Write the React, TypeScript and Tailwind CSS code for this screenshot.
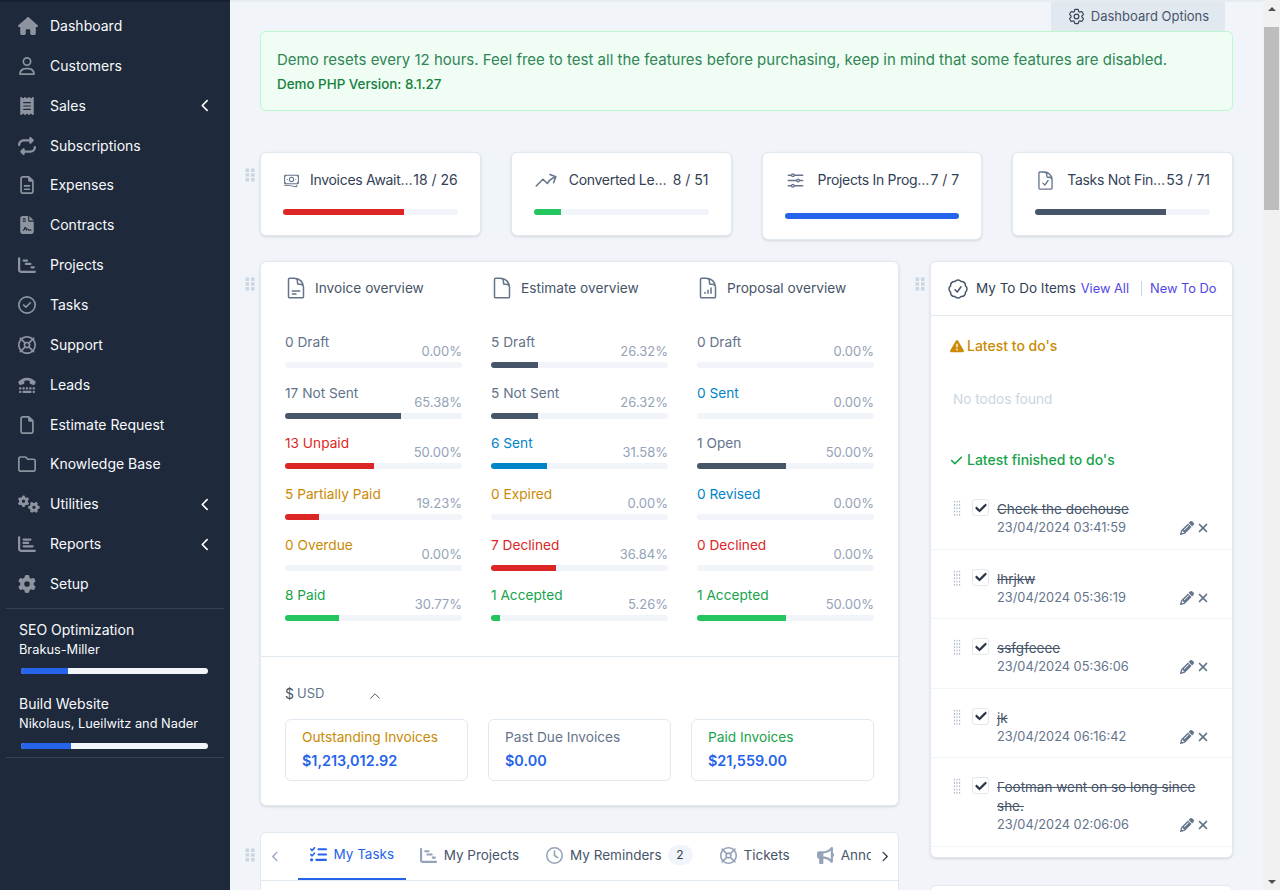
import type { ReactNode } from 'react';
import {
  FaBullhorn,
  FaChartBar,
  FaChartGantt,
  FaCheck,
  FaChevronLeft,
  FaChevronRight,
  FaFileContract,
  FaGear,
  FaGears,
  FaHouse,
  FaListCheck,
  FaPencil,
  FaReceipt,
  FaRegCircleCheck,
  FaRegClock,
  FaRegFile,
  FaRegFileLines,
  FaRegFolder,
  FaRegLifeRing,
  FaRegUser,
  FaRepeat,
  FaTriangleExclamation,
  FaTty,
  FaXmark,
} from 'react-icons/fa6';
import {
  HiOutlineAdjustmentsHorizontal,
  HiOutlineArrowTrendingUp,
  HiOutlineBanknotes,
  HiOutlineCheckBadge,
  HiOutlineChevronUp,
  HiOutlineCog6Tooth,
  HiOutlineDocument,
  HiOutlineDocumentChartBar,
  HiOutlineDocumentCheck,
  HiOutlineDocumentText,
} from 'react-icons/hi2';

const menu = [
  { label: 'Dashboard', icon: <FaHouse className="text-[20px]" /> },
  { label: 'Customers', icon: <FaRegUser /> },
  { label: 'Sales', icon: <FaReceipt />, sub: true },
  { label: 'Subscriptions', icon: <FaRepeat /> },
  { label: 'Expenses', icon: <FaRegFileLines /> },
  { label: 'Contracts', icon: <FaFileContract /> },
  { label: 'Projects', icon: <FaChartGantt /> },
  { label: 'Tasks', icon: <FaRegCircleCheck /> },
  { label: 'Support', icon: <FaRegLifeRing /> },
  { label: 'Leads', icon: <FaTty /> },
  { label: 'Estimate Request', icon: <FaRegFile /> },
  { label: 'Knowledge Base', icon: <FaRegFolder /> },
  { label: 'Utilities', icon: <FaGears className="text-[22px]" />, sub: true },
  { label: 'Reports', icon: <FaChartBar />, sub: true },
  { label: 'Setup', icon: <FaGear /> },
];

const slate = { text: 'text-[#64748b]', bar: 'bg-[#475569]' };
const red = { text: 'text-[#dc2626]', bar: 'bg-[#dc2626]' };
const amber = { text: 'text-[#ca8a04]', bar: 'bg-[#ca8a04]' };
const green = { text: 'text-[#16a34a]', bar: 'bg-[#22c55e]' };
const sky = { text: 'text-[#0284c7]', bar: 'bg-[#0284c7]' };

const overviews = [
  {
    title: 'Invoice overview',
    icon: <HiOutlineDocumentText />,
    rows: [
      { label: '0 Draft', pct: 0, ...slate },
      { label: '17 Not Sent', pct: 65.38, ...slate },
      { label: '13 Unpaid', pct: 50, ...red },
      { label: '5 Partially Paid', pct: 19.23, text: amber.text, bar: red.bar },
      { label: '0 Overdue', pct: 0, ...amber },
      { label: '8 Paid', pct: 30.77, ...green },
    ],
  },
  {
    title: 'Estimate overview',
    icon: <HiOutlineDocument />,
    rows: [
      { label: '5 Draft', pct: 26.32, ...slate },
      { label: '5 Not Sent', pct: 26.32, ...slate },
      { label: '6 Sent', pct: 31.58, ...sky },
      { label: '0 Expired', pct: 0, ...amber },
      { label: '7 Declined', pct: 36.84, ...red },
      { label: '1 Accepted', pct: 5.26, ...green },
    ],
  },
  {
    title: 'Proposal overview',
    icon: <HiOutlineDocumentChartBar />,
    rows: [
      { label: '0 Draft', pct: 0, ...slate },
      { label: '0 Sent', pct: 0, ...sky },
      { label: '1 Open', pct: 50, ...slate },
      { label: '0 Revised', pct: 0, ...sky },
      { label: '0 Declined', pct: 0, ...red },
      { label: '1 Accepted', pct: 50, ...green },
    ],
  },
];

const todos = [
  { text: 'Check the dochouse', date: '23/04/2024 03:41:59' },
  { text: 'lhrjkw', date: '23/04/2024 05:36:19' },
  { text: 'ssfgfeeee', date: '23/04/2024 05:36:06' },
  { text: 'jk', date: '23/04/2024 06:16:42' },
  { text: 'Footman went on so long since she.', date: '23/04/2024 02:06:06' },
];

function Grip({ className }: { className: string }) {
  return (
    <div className={`shrink-0 pt-[16px] ${className}`}>
      <svg width="11" height="14" viewBox="0 0 11 14" className="fill-[#cbd5e1]">
        <rect x="0.5" y="0.5" width="3.6" height="3.6" rx="0.5" />
        <rect x="6" y="0.5" width="3.6" height="3.6" rx="0.5" />
        <rect x="0.5" y="5.2" width="3.6" height="3.6" rx="0.5" />
        <rect x="6" y="5.2" width="3.6" height="3.6" rx="0.5" />
        <rect x="0.5" y="9.9" width="3.6" height="3.6" rx="0.5" />
        <rect x="6" y="9.9" width="3.6" height="3.6" rx="0.5" />
      </svg>
    </div>
  );
}

function Sidebar() {
  return (
    <aside className="w-[230px] shrink-0 h-full bg-[#1e293b] border-t-2 border-[#18212f] pt-[4px] text-[#f8fafc]">
      {menu.map((item) => (
        <div key={item.label} className="h-[39.86px] flex items-center pl-[18px] pr-[18.5px]">
          <span className="w-[32px] text-[18px] text-[#8d94a0] shrink-0">{item.icon}</span>
          <span className="flex-1 text-sm">{item.label}</span>
          {item.sub && <FaChevronLeft className="text-[13px] text-white" />}
        </div>
      ))}
      <div className="mx-[6px] mt-[4px] border-t border-b border-[#334155] pt-[11px] pb-[8px]">
        <SidebarProject name="SEO Optimization" client="Brakus-Miller" pct={25} />
        <SidebarProject name="Build Website" client="Nikolaus, Lueilwitz and Nader" pct={27} />
      </div>
    </aside>
  );
}

function SidebarProject({ name, client, pct }: { name: string; client: string; pct: number }) {
  return (
    <div className="pl-[13px] pr-[16px] mb-[20px] last:mb-0">
      <p className="text-sm leading-[20px]">{name}</p>
      <p className="text-[12.8px] leading-[19.5px]">{client}</p>
      <div className="ml-[2px] mt-[9px] h-[6px] rounded-full bg-[#f1f5f9] overflow-hidden">
        <div className="h-full bg-[#2563eb]" style={{ width: `${pct}%` }} />
      </div>
    </div>
  );
}

function StatCard({ icon, iconBox, title, value, pct, bar, tall }: { icon: ReactNode; iconBox: string; title: string; value: string; pct: number; bar: string; tall?: boolean }) {
  return (
    <div className={`flex-1 min-w-0 bg-white border border-[#e2e8f0] rounded-md shadow-sm px-[22px] pt-[17px] ${tall ? 'h-[88px]' : 'h-[84px]'}`}>
      <div className="flex items-center h-[20px] text-sm text-[#334155]">
        <span className={`text-[#64748b] shrink-0 ${iconBox}`}>{icon}</span>
        <span className="truncate flex-1 min-w-0 tracking-[-0.3px]">{title}</span>
        <span className="shrink-0">{value}</span>
      </div>
      <div className={`h-[6px] rounded-full bg-[#f1f5f9] overflow-hidden ${tall ? 'mt-[23px]' : 'mt-[19px]'}`}>
        <div className={`h-full ${bar}`} style={{ width: `${pct}%` }} />
      </div>
    </div>
  );
}

function Overview({ title, icon, rows }: (typeof overviews)[number]) {
  return (
    <div className="flex-1 min-w-0">
      <div className="flex items-center h-[26px] gap-[7px] text-[13.7px] text-[#475569]">
        <span className="text-[24px] text-[#64748b] -ml-[1px]">{icon}</span>
        {title}
      </div>
      <div className="mt-[31px]">
        {rows.map((row) => (
          <div key={row.label} className="h-[50.7px]">
            <div className="flex justify-between h-[30px]">
              <span className={`text-[13.7px] leading-[20px] ${row.text}`}>{row.label}</span>
              <span className="text-[13px] text-[#94a3b8] pt-[9px] leading-[20px]">{row.pct.toFixed(2)}%</span>
            </div>
            <div className="h-[6px] rounded-full bg-[#f1f5f9] overflow-hidden">
              <div className={`h-full ${row.bar}`} style={{ width: `${row.pct}%` }} />
            </div>
          </div>
        ))}
      </div>
    </div>
  );
}

function Total({ label, value, color }: { label: string; value: string; color: string }) {
  return (
    <div className="flex-1 h-[62px] border border-[#e2e8f0] rounded-md px-[16px] pt-[7px]">
      <p className={`text-[13.7px] leading-[20px] ${color}`}>{label}</p>
      <p className="text-[14.4px] font-semibold leading-[20px] mt-[4px] text-[#2563eb]">{value}</p>
    </div>
  );
}

function TodoRow({ text, date }: { text: string; date: string }) {
  return (
    <div className="flex border-b border-[#f1f5f9] pl-[22px] pr-[22px] pt-[20px] pb-[11.5px]">
      <div className="w-[8px] h-[17px] mr-[11px] shrink-0 bg-[radial-gradient(circle,#94a3b8_0.6px,transparent_0.7px)] bg-[length:2.7px_3.3px]" />
      <div className="w-[17px] h-[17px] mt-[-1px] mr-[8px] shrink-0 rounded-[3px] border border-[#e2e8f0] bg-white flex items-center justify-center">
        <FaCheck className="text-[12px] text-[#1e293b] stroke-current stroke-[40]" />
      </div>
      <div className="flex-1 min-w-0">
        <p className="text-[13.5px] text-[#475569] line-through leading-[19px]">{text}</p>
        <div className="flex items-center justify-between">
          <span className="text-[12.8px] text-[#64748b] leading-[18px]">{date}</span>
          <span className="flex items-center gap-[2px] text-[#64748b]">
            <FaPencil className="text-[14px]" />
            <FaXmark className="text-[14px]" />
          </span>
        </div>
      </div>
    </div>
  );
}

function Tab({ icon, label, active, badge }: { icon: ReactNode; label: string; active?: boolean; badge?: string }) {
  return (
    <div className={`flex items-center h-[47px] pb-[3px] shrink-0 gap-[7px] text-[13.5px] ${active ? 'px-[12px] border-b-2 border-[#2563eb] text-[#2563eb]' : 'px-[13.5px] text-[#475569]'}`}>
      <span className={`text-[17px] ${active ? 'text-[#2563eb]' : 'text-[#94a3b8]'}`}>{icon}</span>
      {label}
      {badge && <span className="w-[25px] h-[20px] -ml-[1px] rounded-full bg-[#f1f5f9] text-[#334155] text-xs flex items-center justify-center">{badge}</span>}
    </div>
  );
}

function Scrollbar() {
  return (
    <div className="w-[17px] shrink-0 h-full bg-[#f1f1f1] flex flex-col items-center">
      <div className="h-[17px] flex items-center justify-center">
        <div className="w-0 h-0 border-x-[4px] border-x-transparent border-b-[4px] border-b-[#505050]" />
      </div>
      <div className="w-[15px] h-[183px] mt-[10px] bg-[#bdbdbd]" />
      <div className="flex-1" />
      <div className="h-[17px] flex items-center justify-center">
        <div className="w-0 h-0 border-x-[4px] border-x-transparent border-t-[4px] border-t-[#505050]" />
      </div>
    </div>
  );
}

export default function App() {
  return (
    <div className="flex h-[890px] w-full overflow-hidden bg-[#f1f5f9] font-['Inter',sans-serif]">
      <Sidebar />
      <main className="flex-1 min-w-0 overflow-hidden border-t-2 border-[#e2e8f0]/70">
        <div className="flex justify-end pr-[38px]">
          <div className="w-[174px] h-[29px] bg-[#e2e8f0] flex items-center justify-center gap-[5px] text-[13px] text-[#475569]">
            <HiOutlineCog6Tooth className="text-[19px] text-[#334155]" />
            Dashboard Options
          </div>
        </div>
        <div className="pr-[30px]">
          <div className="ml-[30px] h-[80px] rounded-md border border-[#bbf7d0] bg-[#f0fdf4] pl-[16px] pt-[17px] text-[#15803d]">
            <p className="text-[15px] leading-[22px] text-[#2f8554]">Demo resets every 12 hours. Feel free to test all the features before purchasing, keep in mind that some features are disabled.</p>
            <p className="text-[13.4px] font-medium leading-[20px] mt-[3px]">Demo PHP Version: 8.1.27</p>
          </div>

          <div className="flex mt-[41px]">
            <Grip className="w-[30px] pl-[15px]" />
            <div className="flex-1 min-w-0 flex items-start gap-[30px]">
              <StatCard iconBox="w-[27px]" icon={<HiOutlineBanknotes className="text-[17px]" />} title="Invoices Awaiting Payment" value="18 / 26" pct={69.2} bar="bg-[#dc2626]" />
              <StatCard iconBox="w-[35px]" icon={<HiOutlineArrowTrendingUp className="text-[24px]" />} title="Converted Leads" value="8 / 51" pct={15.7} bar="bg-[#22c55e]" />
              <StatCard iconBox="w-[33px]" icon={<HiOutlineAdjustmentsHorizontal className="text-[21px]" />} title="Projects In Progress" value="7 / 7" pct={100} bar="bg-[#2563eb]" tall />
              <StatCard iconBox="w-[32px]" icon={<HiOutlineDocumentCheck className="text-[21px]" />} title="Tasks Not Finished" value="53 / 71" pct={74.6} bar="bg-[#475569]" />
            </div>
          </div>

          <div className="flex items-start mt-[21px]">
            <div className="shrink-0">
              <div className="flex items-start">
                <Grip className="w-[30px] pl-[15px]" />
                <section className="w-[639px] shrink-0 h-[545px] bg-white border border-[#e2e8f0] rounded-md shadow-sm">
                  <div className="flex gap-[29px] px-[24px] pt-[13px] h-[395px] border-b border-[#e2e8f0]">
                    {overviews.map((o) => (
                      <Overview key={o.title} {...o} />
                    ))}
                  </div>
                  <div className="px-[24px] pt-[27px]">
                    <div className="flex items-center h-[20px] text-[13px] text-[#64748b]">
                      <span className="text-sm text-[#475569] mr-[3px]">$</span> USD
                      <HiOutlineChevronUp className="ml-[44px] mt-[3px] text-[14px] text-[#334155]" />
                    </div>
                    <div className="flex gap-[20px] mt-[15px]">
                      <Total label="Outstanding Invoices" value="$1,213,012.92" color="text-[#ca8a04]" />
                      <Total label="Past Due Invoices" value="$0.00" color="text-[#64748b]" />
                      <Total label="Paid Invoices" value="$21,559.00" color="text-[#16a34a]" />
                    </div>
                  </div>
                </section>
              </div>

              <div className="flex items-start mt-[26px]">
                <Grip className="w-[30px] pl-[15px]" />
                <section className="w-[639px] shrink-0 h-[100px] bg-white border border-[#e2e8f0] rounded-md">
                  <div className="flex items-center h-[48px] border-b border-[#e2e8f0] px-[8.5px]">
                    <FaChevronLeft className="text-[11px] text-[#94a3b8] shrink-0" />
                    <div className="flex-1 min-w-0 flex overflow-hidden ml-[17px] mr-[8px]">
                      <Tab icon={<FaListCheck />} label="My Tasks" active />
                      <Tab icon={<FaChartGantt />} label="My Projects" />
                      <Tab icon={<FaRegClock />} label="My Reminders" badge="2" />
                      <Tab icon={<FaRegLifeRing />} label="Tickets" />
                      <Tab icon={<FaBullhorn />} label="Announcements" />
                    </div>
                    <FaChevronRight className="text-[11px] text-[#334155] shrink-0" />
                  </div>
                </section>
              </div>
            </div>

            <Grip className="w-[31px] pl-[16px]" />

            <div className="flex-1 min-w-0">
              <section className="bg-white border border-[#e2e8f0] rounded-md shadow-sm">
                <div className="flex items-center h-[54px] pl-[15px] border-b border-[#e2e8f0] text-[12.8px] whitespace-nowrap overflow-hidden">
                  <HiOutlineCheckBadge className="text-[24px] text-[#475569] mr-[6px] shrink-0" />
                  <span className="text-[13.5px] text-[#334155] mr-[5px]">My To Do Items</span>
                  <span className="text-[#4f46e5]">View All</span>
                  <span className="h-[15px] border-l border-[#cbd5e1] ml-[12px] mr-[8px]" />
                  <span className="text-[#4f46e5]">New To Do</span>
                </div>
                <div className="pl-[19px] pt-[20px]">
                  <p className="flex items-center gap-[3px] h-[20px] text-sm font-medium text-[#ca8a04]">
                    <FaTriangleExclamation className="text-[14px]" /> Latest to do's
                  </p>
                  <p className="mt-[33px] pl-[3px] h-[20px] text-[13.6px] leading-[20px] text-[#cbd5e1]">No todos found</p>
                  <p className="flex items-center gap-[4px] h-[20px] mt-[41px] text-sm font-medium text-[#16a34a]">
                    <FaCheck className="text-[13px]" /> Latest finished to do's
                  </p>
                </div>
                <div className="mt-[10px] mb-[10px]">
                  {todos.map((t) => (
                    <TodoRow key={t.date} {...t} />
                  ))}
                </div>
              </section>
              <section className="h-[100px] mt-[27px] bg-white border border-[#e2e8f0] rounded-md" />
            </div>
          </div>
        </div>
      </main>
      <Scrollbar />
    </div>
  );
}
